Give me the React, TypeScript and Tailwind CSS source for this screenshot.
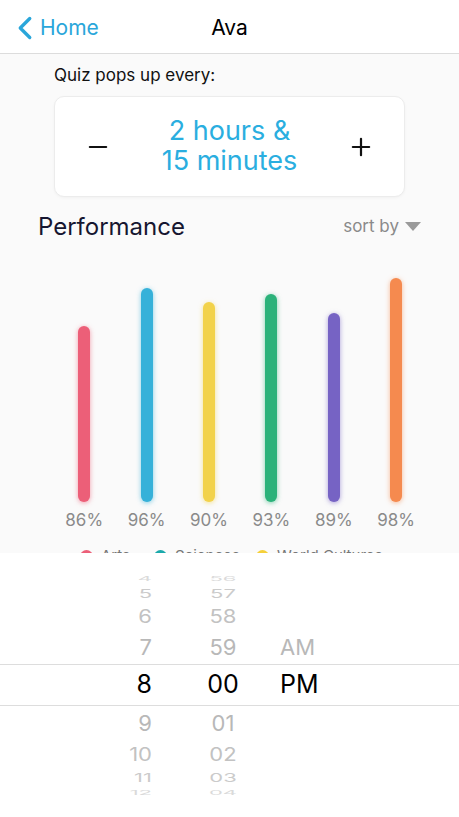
import { ChevronLeft, Minus, Plus } from 'lucide-react'

const bars = [
  { pct: 86, top: 326, color: '#ec5f78' },
  { pct: 96, top: 288, color: '#36b1d9' },
  { pct: 90, top: 302, color: '#f2d24a' },
  { pct: 93, top: 294, color: '#2bb27a' },
  { pct: 89, top: 313, color: '#7663c4' },
  { pct: 98, top: 278, color: '#f58a4f' },
]

const legend = [
  { label: 'Arts', color: '#ec5f78', w: 'w-[74px]' },
  { label: 'Sciences', color: '#1aa9ab', w: 'w-[102px]' },
  { label: 'World Cultures', color: '#f5d03a', w: 'w-[140px]' },
]

// wheel rows, top to bottom; selected row in the middle
const rows = [
  { h: 'h-[12px]', scale: 'scale-y-[0.3]', color: 'text-[#dadada]', hr: '4', min: '56', ap: '' },
  { h: 'h-[18px]', scale: 'scale-y-[0.55]', color: 'text-[#cbcbcb]', hr: '5', min: '57', ap: '' },
  { h: 'h-[28px]', scale: 'scale-y-[0.82]', color: 'text-[#c2c2c2]', hr: '6', min: '58', ap: '' },
  { h: 'h-[34px]', scale: 'scale-y-[0.95]', color: 'text-[#b8b8b8]', hr: '7', min: '59', ap: 'AM' },
  { h: 'h-[42px]', scale: '', color: 'text-black', hr: '8', min: '00', ap: 'PM', sel: true },
  { h: 'h-[34px]', scale: 'scale-y-[0.95]', color: 'text-[#b8b8b8]', hr: '9', min: '01', ap: '' },
  { h: 'h-[28px]', scale: 'scale-y-[0.82]', color: 'text-[#c2c2c2]', hr: '10', min: '02', ap: '' },
  { h: 'h-[18px]', scale: 'scale-y-[0.55]', color: 'text-[#cbcbcb]', hr: '11', min: '03', ap: '' },
  { h: 'h-[12px]', scale: 'scale-y-[0.3]', color: 'text-[#dadada]', hr: '12', min: '04', ap: '' },
]

export default function App() {
  return (
    <div className="w-[459px] h-[817px] overflow-hidden bg-white flex flex-col" style={{ fontFamily: 'Inter, "Noto Sans", sans-serif' }}>
      {/* Nav bar */}
      <div className="h-[54px] shrink-0 flex items-center relative border-b border-[#dcdcdc] bg-white pt-[2px]">
        <div className="flex items-center pl-[6px] text-[#2aa6da]">
          <ChevronLeft className="w-[38px] h-[38px]" strokeWidth={2.1} />
          <span className="text-[21px] -ml-[4px]">Home</span>
        </div>
        <div className="absolute left-0 right-0 text-center text-[21px] text-black pointer-events-none">Ava</div>
      </div>

      {/* Content */}
      <div className="h-[499px] shrink-0 overflow-hidden bg-[#fafafa] flex flex-col">
        <div className="shrink-0 px-[54px] pt-[10px] text-[17px] text-[#111] leading-[22px]">Quiz pops up every:</div>
        <div className="shrink-0 mx-[54px] mt-[10px] h-[101px] rounded-[10px] bg-white border border-[#ececec] shadow-[0_1px_3px_rgba(0,0,0,0.04)] flex items-center justify-between px-[29px]">
          <Minus className="w-[28px] h-[28px] text-[#111]" strokeWidth={1.9} />
          <div className="text-center text-[27px] leading-[30px] text-[#2aaee0] pb-[2px]">
            <div>2 hours &amp;</div>
            <div>15 minutes</div>
          </div>
          <Plus className="w-[28px] h-[28px] text-[#111]" strokeWidth={1.9} />
        </div>

        <div className="shrink-0 flex items-center justify-between pl-[38px] pr-[38px] mt-[14px] h-[32px]">
          <span className="text-[24px] text-[#161630]">Performance</span>
          <span className="flex items-center text-[17px] text-[#8a8a8a]">
            sort by
            <svg width="16" height="10" viewBox="0 0 16 10" className="ml-[6px]">
              <path d="M0 0 H16 L8 9 Z" fill="#9a9a9a" />
            </svg>
          </span>
        </div>

        {/* Chart */}
        <div className="shrink-0 flex pl-[53px] mt-[25px]">
          {bars.map((b) => (
            <div key={b.pct} className="w-[62.4px] flex flex-col items-center">
              <div className="h-[234px] flex items-end">
                <div
                  className="w-[12px] rounded-full"
                  style={{ height: 502 - b.top, backgroundColor: b.color, boxShadow: `0 1px 5px ${b.color}99` }}
                />
              </div>
              <div className="mt-[8px] text-[17px] text-[#8a8a8a] leading-[20px]">{b.pct}%</div>
            </div>
          ))}
        </div>

        <div className="shrink-0 flex pl-[80px] mt-[16px] items-center h-[20px]">
          {legend.map((l) => (
            <div key={l.label} className={`${l.w} flex items-center gap-[8px]`}>
              <span className="w-[13px] h-[13px] rounded-full shrink-0" style={{ backgroundColor: l.color }} />
              <span className="text-[15px] text-[#777]">{l.label}</span>
            </div>
          ))}
        </div>
      </div>

      {/* Time picker */}
      <div className="flex-1 bg-white pt-[19px]">
        {rows.map((r, i) => (
          <div
            key={i}
            className={`${r.h} flex items-center ${r.sel ? 'border-y border-[#dddddd]' : ''}`}
          >
            <div className={`flex items-center pl-[92px] ${r.scale} ${r.color} ${r.sel ? 'text-[25px]' : 'text-[22px]'}`}>
              <span className="w-[60px] text-right">{r.hr}</span>
              <span className="w-[46px] ml-[48px] text-center">{r.min}</span>
              <span className="w-[60px] ml-[34px]">{r.ap}</span>
            </div>
          </div>
        ))}
      </div>
    </div>
  )
}
